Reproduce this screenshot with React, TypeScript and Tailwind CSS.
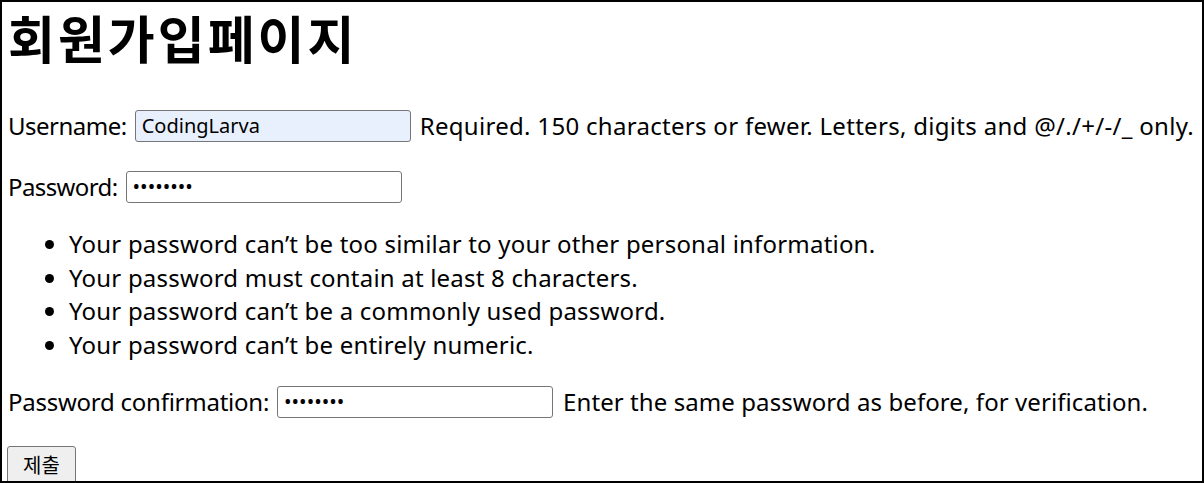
import React from "react";

const font = { fontFamily: '"Noto Sans", "Noto Sans CJK KR", sans-serif' };

const hints = [
  "Your password can’t be too similar to your other personal information.",
  "Your password must contain at least 8 characters.",
  "Your password can’t be a commonly used password.",
  "Your password can’t be entirely numeric.",
];

function Field({ value, type = "text", filled = false }: { value: string; type?: string; filled?: boolean }) {
  return (
    <input
      readOnly
      type={type}
      value={value}
      className={
        "h-[32px] w-[276px] rounded-[3px] border border-[#767676] px-[6px] text-[20px] text-black outline-none " +
        (filled ? "bg-[#e8f0fe]" : "bg-white")
      }
      style={font}
    />
  );
}

export default function App() {
  return (
    <div
      className="box-border h-[483px] w-[1204px] overflow-hidden border-2 border-black bg-white pl-[6px] text-[24px] leading-[33.5px] text-black"
      style={font}
    >
      <h1 className="text-[51px] font-bold leading-[70px] tracking-[3px]" style={{ fontFamily: '"Noto Sans CJK KR", sans-serif' }}>
        회원가입페이지
      </h1>

      <form className="mt-[36px] flex flex-col">
        <div className="flex h-[36px] items-center gap-[8px]">
          <label className="tracking-[-0.5px]">Username:</label>
          <Field value="CodingLarva" filled />
          <span className="ml-[1px] tracking-[0.3px]">Required. 150 characters or fewer. Letters, digits and @/./+/-/_ only.</span>
        </div>

        <div className="mt-[25px] flex h-[36px] items-center gap-[8px]">
          <label className="tracking-[-0.6px]">Password:</label>
          <Field value="12345678" type="password" />
        </div>

        <ul className="mt-[22px] list-disc pl-[61px] tracking-[0.2px]">
          {hints.map((h) => (
            <li key={h}>{h}</li>
          ))}
        </ul>

        <div className="mt-[23px] flex h-[36px] items-center gap-[8px]">
          <label className="tracking-[-0.25px]">Password confirmation:</label>
          <Field value="12345678" type="password" />
          <span className="ml-[2px] tracking-[0.08px]">Enter the same password as before, for verification.</span>
        </div>

        <div className="mt-[26px]">
          <button
            type="button"
            className="-ml-[1px] h-[38px] rounded-[3px] border border-[#767676] bg-[#efefef] px-[15px] text-[20px] leading-[34px]"
            style={{ fontFamily: '"Noto Sans CJK KR", sans-serif' }}
          >
            제출
          </button>
        </div>
      </form>
    </div>
  );
}
